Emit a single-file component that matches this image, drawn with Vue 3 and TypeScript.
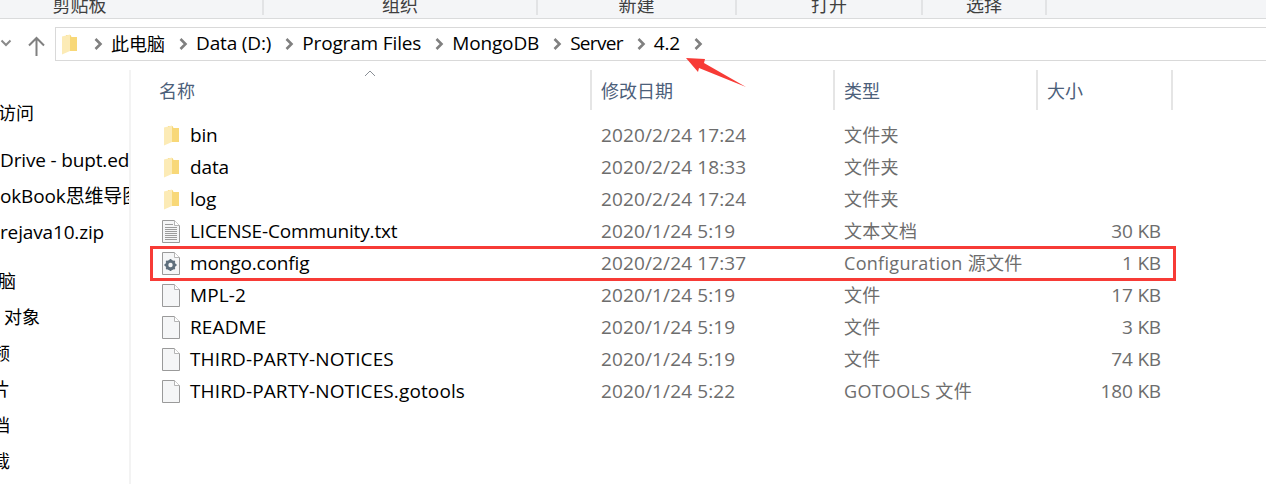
<script setup lang="ts">
interface FileRow { name: string; date: string; type: string; size: string; icon: 'folder' | 'text' | 'config' | 'blank' }

const ribbon = ['剪贴板', '组织', '新建', '打开', '选择']
const crumbs = ['此电脑', 'Data (D:)', 'Program Files', 'MongoDB', 'Server', '4.2']
const navGroups: { label: string; shift: number }[][] = [
  [{ label: '访问', shift: -2 }],
  [
    { label: 'Drive - bupt.edu.cn', shift: 0 },
    { label: 'okBook思维导图', shift: 0 },
    { label: 'rejava10.zip', shift: 0 },
  ],
  [
    { label: '脑', shift: -2 },
    { label: '对象', shift: 4 },
    { label: '频', shift: -8 },
    { label: '片', shift: -8 },
    { label: '档', shift: -8 },
    { label: '载', shift: -8 },
  ],
]
const isCjk = (text: string): boolean => /^[^\x00-\x7f]+$/.test(text)
const isWide = (text: string): boolean => /^(THIRD|MPL|README)/.test(text)
const files: FileRow[] = [
  { name: 'bin', date: '2020/2/24 17:24', type: '文件夹', size: '', icon: 'folder' },
  { name: 'data', date: '2020/2/24 18:33', type: '文件夹', size: '', icon: 'folder' },
  { name: 'log', date: '2020/2/24 17:24', type: '文件夹', size: '', icon: 'folder' },
  { name: 'LICENSE-Community.txt', date: '2020/1/24 5:19', type: '文本文档', size: '30 KB', icon: 'text' },
  { name: 'mongo.config', date: '2020/2/24 17:37', type: 'Configuration 源文件', size: '1 KB', icon: 'config' },
  { name: 'MPL-2', date: '2020/1/24 5:19', type: '文件', size: '17 KB', icon: 'blank' },
  { name: 'README', date: '2020/1/24 5:19', type: '文件', size: '3 KB', icon: 'blank' },
  { name: 'THIRD-PARTY-NOTICES', date: '2020/1/24 5:19', type: '文件', size: '74 KB', icon: 'blank' },
  { name: 'THIRD-PARTY-NOTICES.gotools', date: '2020/1/24 5:22', type: 'GOTOOLS 文件', size: '180 KB', icon: 'blank' },
]
</script>

<template>
  <div class="explorer">
    <div class="ribbon">
      <div v-for="label in ribbon" :key="label" class="ribbon-group"><span>{{ label }}</span></div>
    </div>

    <div class="address-row">
      <svg class="nav-down" width="12" height="8" viewBox="0 0 12 8"><path d="M1.500 1.500 6 6l4.500-4.500" fill="none" stroke="#8a8a8a" stroke-width="2" /></svg>
      <svg class="nav-up" width="17" height="20" viewBox="0 0 17 20"><path d="M8.500 20V2M1 9.500 8.500 2 16 9.500" fill="none" stroke="#808080" stroke-width="2" /></svg>
      <div class="address-box">
        <svg class="crumb-folder" width="15" height="21" viewBox="0 0 15 21">
          <path d="M4 1h4.500l1 2h5.500V17H4z" fill="#f8d878" />
          <path d="M0 2.500 8 .5V17L0 20.500z" fill="#fcebb6" />
        </svg>
        <template v-for="crumb in crumbs" :key="crumb">
          <svg class="crumb-sep" width="9" height="12" viewBox="0 0 9 12"><path d="M1.500 1 6.500 6l-5 5" fill="none" stroke="#808080" stroke-width="2.600" /></svg>
          <span class="crumb" :class="{ cjk: isCjk(crumb), tight: crumb === 'Server' }">{{ crumb }}</span>
        </template>
        <svg class="crumb-sep" width="9" height="12" viewBox="0 0 9 12"><path d="M1.500 1 6.500 6l-5 5" fill="none" stroke="#808080" stroke-width="2.600" /></svg>
      </div>
    </div>

    <div class="body">
      <nav class="nav">
        <div v-for="(group, g) in navGroups" :key="g" class="nav-group">
          <div v-for="item in group" :key="item.label" class="nav-item" :class="{ cjk: isCjk(item.label) }" :style="{ marginLeft: item.shift + 'px' }">{{ item.label }}</div>
        </div>
      </nav>

      <main class="list">
        <div class="list-head">
          <div class="col-name head-cell">名称
            <svg class="sort" width="12" height="7" viewBox="0 0 12 7"><path d="M1 6 6 1l5 5" fill="none" stroke="#8a8f96" stroke-width="1" /></svg>
          </div>
          <div class="col-date head-cell">修改日期</div>
          <div class="col-type head-cell">类型</div>
          <div class="col-size head-cell">大小</div>
        </div>

        <div v-for="file in files" :key="file.name" class="row">
          <div class="col-name cell" :class="{ wide: isWide(file.name) }">
            <span class="icon">
              <svg v-if="file.icon === 'folder'" width="15" height="21" viewBox="0 0 15 21">
                <path d="M4 1h4.500l1 2h5.500V17H4z" fill="#f8d878" />
                <path d="M0 2.500 8 .5V17L0 20.500z" fill="#fcebb6" />
              </svg>
              <svg v-else width="18" height="23" viewBox="0 0 18 23">
                <path d="M.5.500h12l5 5v17H.5z" fill="#f5f6f7" stroke="#9a9a9a" />
                <path d="M12.500.5v5h5" fill="#fff" stroke="#b5b5b5" />
                <path v-if="file.icon === 'text'" d="M3 4.500h8M3 7.500h12M3 9.500h12M3 11.500h12M3 13.500h12M3 15.500h12M3 17.500h12M3 19.500h12" stroke="#9c9c9c" stroke-width="1" />
                <g v-if="file.icon === 'config'">
                  <circle cx="8.500" cy="13" r="3.800" fill="none" stroke="#5f6f7c" stroke-width="2.800" />
                  <path d="M8.500 7v12M2.500 13h12M4.300 8.800l8.400 8.400M12.700 8.800l-8.400 8.400" stroke="#5f6f7c" stroke-width="1.800" />
                  <circle cx="8.500" cy="13" r="2.200" fill="#f5f6f7" />
                </g>
              </svg>
            </span>
            {{ file.name }}
          </div>
          <div class="col-date cell muted">{{ file.date }}</div>
          <div class="col-type cell muted">{{ file.type }}</div>
          <div class="col-size cell muted">{{ file.size }}</div>
        </div>
      </main>
    </div>

    <div class="highlight"></div>
    <svg class="arrow" width="62" height="32" viewBox="0 0 62 32">
      <path d="M1 1 20 2 19 6 61 30 14 11 13 15z" fill="#f73b36" />
    </svg>
  </div>
</template>

<style>
html, body { margin: 0; background: #fff; overflow: hidden; }
</style>

<style scoped>
.explorer {
  position: relative;
  width: 1266px;
  height: 484px;
  overflow: hidden;
  background: #fff;
  color: #000;
  font-family: "Open Sans", "Noto Sans CJK SC", sans-serif;
  font-size: 19px;
  letter-spacing: -0.15px;
}
.cjk { font-size: 18px; letter-spacing: 0; }
.ribbon {
  display: flex;
  height: 18px;
  margin-left: -103px;
  background: #f4f5f7;
  border-bottom: 1px solid #dadbdc;
  overflow: hidden;
  font-family: "Noto Sans CJK SC", sans-serif;
  font-size: 18px;
  letter-spacing: 0;
  color: #3f3f3f;
}
.ribbon-group {
  position: relative;
  display: flex;
  justify-content: center;
  height: 15px;
  line-height: 8px;
  border-right: 2px solid #e2e3e5;
  box-sizing: border-box;
}
.ribbon-group:nth-child(1) { width: 367px; }
.ribbon-group:nth-child(2) { width: 274px; }
.ribbon-group:nth-child(3) { width: 199px; }
.ribbon-group:nth-child(4) { width: 186px; }
.ribbon-group:nth-child(5) { width: 124px; }
.address-row {
  display: flex;
  align-items: flex-start;
  height: 41px;
  padding-top: 8px;
  box-sizing: border-box;
}
.nav-down { margin: 12px 0 0 0; flex: none; }
.nav-up { margin: 9px 0 0 16px; flex: none; }
.address-box {
  display: flex;
  align-items: center;
  flex: 1;
  height: 34px;
  margin-left: 10px;
  padding-left: 6px;
  box-sizing: border-box;
  border: 1px solid #d9d9d9;
  border-right: 0;
}
.crumb-folder { flex: none; }
.crumb-sep { flex: none; margin: 0 8px 0 14px; }
.crumb-folder + .crumb-sep { margin-left: 17px; }
.crumb { white-space: nowrap; margin-top: -2px; }
.crumb.tight { letter-spacing: -0.7px; }
.body { display: flex; }
.nav {
  flex: none;
  width: 131px;
  height: 424px;
  box-sizing: border-box;
  padding-top: 25px;
  overflow: hidden;
  border-right: 2px solid #f3f3f3;
  margin-top: 10px;
}
.nav-group { margin-bottom: 11px; }
.nav-group:nth-child(2) { margin-bottom: 13px; }
.nav-item {
  height: 36px;
  line-height: 36px;
  white-space: nowrap;
}
.list { flex: 1; min-width: 0; }
.list-head {
  display: flex;
  height: 40px;
  margin-top: 10px;
  margin-bottom: 9px;
}
.head-cell {
  position: relative;
  line-height: 40px;
  color: #4c607a;
  font-family: "Noto Sans CJK SC", sans-serif;
  font-size: 18px;
  letter-spacing: 0;
  border-right: 2px solid #e5e5e5;
  box-sizing: border-box;
}
.sort { position: absolute; left: 233px; top: 0; }
.row { display: flex; height: 32px; align-items: center; }
.cell {
  display: flex;
  align-items: center;
  line-height: 32px;
  white-space: nowrap;
  box-sizing: border-box;
}
.icon {
  display: flex;
  justify-content: center;
  width: 20px;
  margin-right: 9px;
  margin-left: -1px;
}
.muted { color: #6d6d6d; }
.col-name { width: 461px; padding-left: 28px; }
.cell.col-name { padding-left: 31px; }
.cell.col-name.wide { letter-spacing: 0.12px; }
.col-date { width: 243px; padding-left: 9px; }
.cell.col-date { letter-spacing: 0.13px; }
.col-type { width: 203px; padding-left: 9px; }
.cell.col-type { font-size: 18px; letter-spacing: 0.3px; }
.col-size { width: 135px; padding-right: 12px; justify-content: flex-end; }
.head-cell.col-size { justify-content: flex-start; padding-left: 9px; padding-right: 0; }
.highlight {
  position: absolute;
  left: 150px;
  top: 246px;
  width: 1026px;
  height: 35px;
  box-sizing: border-box;
  border: 3px solid #f73b36;
}
.arrow { position: absolute; left: 685px; top: 57px; }
</style>
